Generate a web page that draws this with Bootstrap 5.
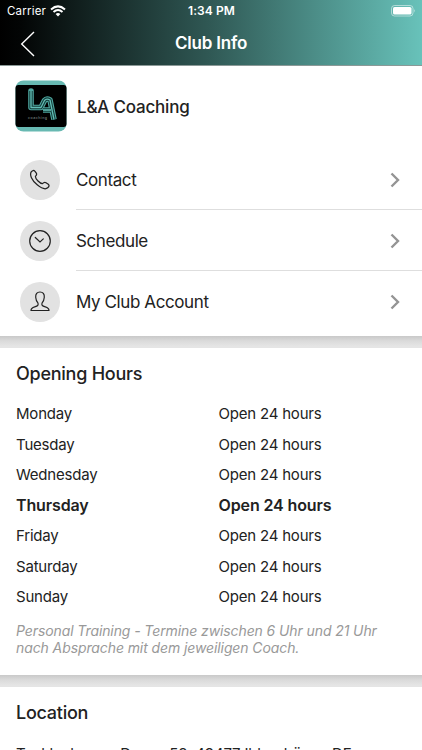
<!DOCTYPE html>
<html lang="en">
<head>
<meta charset="utf-8">
<meta name="viewport" content="width=device-width, initial-scale=1">
<title>Club Info</title>
<link href="https://cdn.jsdelivr.net/npm/bootstrap@5.3.0/dist/css/bootstrap.min.css" rel="stylesheet">
<style>
html, body { height: 750px; overflow: hidden; }
body { font-family: Inter, "Liberation Sans", sans-serif; color: #222; background: #fff; font-size: 15px; }
svg { display: block; flex: none; }
.top-area { height: 66px; color: #fff; background: linear-gradient(90deg, #000 0%, #030505 5%, #305955 50%, #4c8e88 75%, #68c2ba 100%); border-bottom: 1px solid #8b9997; }
.status-line { height: 22px; display: grid; grid-template-columns: 1fr auto 1fr; font-size: 11.5px; line-height: 22px; padding: 0 6px 0 7px; }
.carrier { letter-spacing: .2px; }
.clock { font-weight: 600; font-size: 12px; letter-spacing: .1px; }
.title-line { height: 43px; display: grid; grid-template-columns: 1fr auto 1fr; padding: 0 20px; }
.title-line h1 { font-size: 17px; font-weight: 600; line-height: 43px; letter-spacing: -.2px; }
.club { height: 83px; padding: 0 16px 3px 15px; gap: 10px; }
.club-name { font-size: 17px; font-weight: 500; letter-spacing: -.2px; padding-top: 4px; }
.entry { height: 61px; padding-left: 20px; gap: 16px; }
.entry-icon { width: 40px; height: 40px; background: #e2e2e2; }
.entry-body { height: 61px; font-size: 17px; letter-spacing: -.4px; border-bottom: 1px solid #dedede; padding-right: 22px; }
.entry-body span { padding-top: 4px; }
.entry-body svg { margin-top: 1px; }
.entry:last-child .entry-body { border-color: transparent; }
.gap-band { height: 12px; background: linear-gradient(#c9c9c9, #dadada 40%, #e5e5e5 85%); }
.block-title { font-size: 18px; font-weight: 500; line-height: 24px; letter-spacing: -.25px; }
.hours { height: 327px; padding-top: 14px; }
.hours-list { padding-top: 13px; }
.hours-row { display: grid; grid-template-columns: 202.5px 1fr; height: 30.55px; line-height: 30.55px; letter-spacing: -.2px; }
.hours-row.today { font-size: 16px; font-weight: 600; letter-spacing: -.12px; line-height: 29px; }
.remark { padding-top: 9px; font-size: 14px; line-height: 17px; font-style: italic; color: #999; letter-spacing: -.1px; }
.place { padding-top: 14px; }
.address { padding-top: 18px; line-height: 22px; letter-spacing: -.16px; }
</style>
</head>
<body>
<header class="top-area">
  <div class="status-line align-items-center">
    <div class="d-flex align-items-center gap-1"><span class="carrier">Carrier</span>
      <svg width="16" height="12" viewBox="0 0 16 12" fill="none" stroke="#fff" stroke-width="2"><path d="M1 4.500Q8-1.700 15 4.500M3.500 7Q8 3.100 12.500 7"/><path d="M5.600 8.900Q8 7 10.400 8.900L8 11.400Z" fill="#fff" stroke="none"/></svg>
    </div>
    <span class="clock">1:34 PM</span>
    <svg class="ms-auto" width="25" height="12" viewBox="0 0 25 12"><rect x=".5" y=".5" width="21.500" height="10.500" rx="3" fill="none" stroke="#fff" stroke-opacity=".5"/><rect x="2" y="2" width="18.500" height="7.500" rx="1.600" fill="#fff"/><path d="M23.200 4Q24.700 5.750 23.200 7.500Z" fill="#fff" fill-opacity=".6"/></svg>
  </div>
  <div class="title-line align-items-center">
    <svg width="15" height="26" viewBox="0 0 15 26" fill="none" stroke="#fff" stroke-width="1.400"><path d="M14 1 1.700 13 14 25"/></svg>
    <h1 class="m-0">Club Info</h1>
  </div>
</header>
<main>
  <section>
    <div class="club d-flex align-items-center">
      <svg width="52" height="52" viewBox="0 0 52 52">
        <rect x=".5" y=".5" width="51" height="51" rx="8" fill="#68b9b2"/>
        <rect x=".5" y="5" width="51" height="42" rx="3"/>
        <g fill="none" stroke-linejoin="round">
          <path stroke="#4fa69f" stroke-width="5.600" d="M16 11V27.500H26L29.500 20.500Q31.500 18 35 20L39 39.500M28 30H36"/>
          <path stroke="#123c39" stroke-width="3.400" d="M16 11V27.500H26L29.500 20.500Q31.500 18 35 20L39 39.500M28 30H36"/>
          <path stroke="#64bdb5" stroke-width="1.300" d="M16 11V27.500H26L29.500 20.500Q31.500 18 35 20L39 39.500M28 30H36"/>
        </g>
        <path d="M13.200 11A2.800 2.800 0 0 1 18.800 11Z" fill="#4fa69f"/>
        <text x="13" y="39" font-size="3.600" textLength="19" fill="#8a9a99">coaching</text>
      </svg>
      <span class="club-name">L&amp;A Coaching</span>
    </div>
    <div class="entry d-flex align-items-center">
      <div class="entry-icon rounded-circle d-flex align-items-center justify-content-center">
        <svg width="22" height="22" viewBox="0 0 22 22" fill="none" stroke="#222" stroke-width="1.250" stroke-linejoin="round"><path d="M2.200 2.900C3.600 1.300 4.800 1 6 2.300L7.300 4.200C8.200 5.600 7.500 6.400 6.400 7.400C6.500 10 10.900 14.500 13.500 14.700C14.800 13.200 15.600 12.900 17 13.700L19.300 15.200C20.400 16.200 20.300 17.500 18.700 18.800C16.800 20.500 12.800 19.600 8.200 15.800C2.500 11.200 .5 6 2.200 2.900Z"/></svg>
      </div>
      <div class="entry-body d-flex flex-fill align-items-center justify-content-between"><span>Contact</span><svg width="10" height="16" viewBox="0 0 10 16" fill="none" stroke="#949494" stroke-width="2.400"><path d="M1.500 1.500 8 8 1.500 14.500"/></svg></div>
    </div>
    <div class="entry d-flex align-items-center">
      <div class="entry-icon rounded-circle d-flex align-items-center justify-content-center">
        <svg width="22" height="22" viewBox="0 0 22 22" fill="none" stroke="#222" stroke-width="1.200" stroke-linecap="round"><circle cx="11" cy="11" r="10.300"/><path d="M6.300 7.500 11 11.900 14.300 8.900"/></svg>
      </div>
      <div class="entry-body d-flex flex-fill align-items-center justify-content-between"><span>Schedule</span><svg width="10" height="16" viewBox="0 0 10 16" fill="none" stroke="#949494" stroke-width="2.400"><path d="M1.500 1.500 8 8 1.500 14.500"/></svg></div>
    </div>
    <div class="entry d-flex align-items-center">
      <div class="entry-icon rounded-circle d-flex align-items-center justify-content-center">
        <svg width="20" height="21" viewBox="0 0 20 21" fill="none" stroke="#222" stroke-width="1.200" stroke-linejoin="round"><path d="M10 1C7 1 5.500 3 5.700 6.300C5.900 9.300 6.800 10.800 8 12.200C8.500 14.500 7.800 14.900 4.700 15.800C2.200 16.500 1 17.600 1 19.500H19C19 17.600 17.800 16.500 15.300 15.800C12.200 14.900 11.500 14.500 12 12.200C13.200 10.800 14.100 9.300 14.300 6.300C14.500 3 13 1 10 1Z"/></svg>
      </div>
      <div class="entry-body d-flex flex-fill align-items-center justify-content-between"><span>My Club Account</span><svg width="10" height="16" viewBox="0 0 10 16" fill="none" stroke="#949494" stroke-width="2.400"><path d="M1.500 1.500 8 8 1.500 14.500"/></svg></div>
    </div>
  </section>
  <div class="gap-band mt-1"></div>
  <section class="px-3 hours">
    <h2 class="block-title mb-0">Opening Hours</h2>
    <div class="hours-list">
      <div class="hours-row"><span>Monday</span><span>Open 24 hours</span></div>
      <div class="hours-row"><span>Tuesday</span><span>Open 24 hours</span></div>
      <div class="hours-row"><span>Wednesday</span><span>Open 24 hours</span></div>
      <div class="hours-row today"><span>Thursday</span><span>Open 24 hours</span></div>
      <div class="hours-row"><span>Friday</span><span>Open 24 hours</span></div>
      <div class="hours-row"><span>Saturday</span><span>Open 24 hours</span></div>
      <div class="hours-row"><span>Sunday</span><span>Open 24 hours</span></div>
    </div>
    <p class="remark mb-0">Personal Training - Termine zwischen 6 Uhr und 21 Uhr<br>nach Absprache mit dem jeweiligen Coach.</p>
  </section>
  <div class="gap-band"></div>
  <section class="px-3 place">
    <h2 class="block-title mb-0">Location</h2>
    <div class="text-nowrap address">Tecklenburger Damm 58, 49477 Ibbenbüren, DE</div>
  </section>
</main>
<script src="https://cdn.jsdelivr.net/npm/bootstrap@5.3.0/dist/js/bootstrap.bundle.min.js"></script>
</body>
</html>
